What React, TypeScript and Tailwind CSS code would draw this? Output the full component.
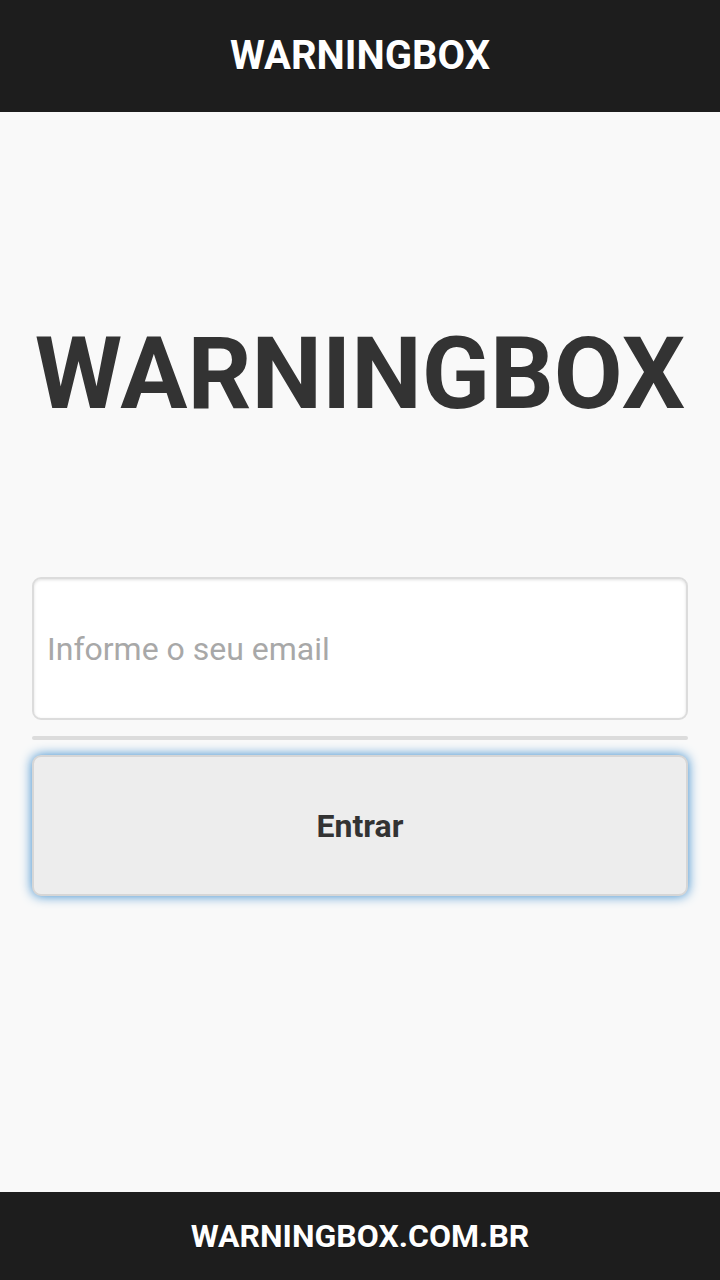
export default function App() {
  return (
    <div
      className="flex h-[1280px] w-[720px] flex-col bg-[#f9f9f9]"
      style={{ fontFamily: "Roboto, 'Noto Sans', sans-serif" }}
    >
      <header className="flex h-[112px] shrink-0 items-center justify-center bg-[#1d1d1d]">
        <h1 className="text-[40px] font-bold leading-none text-white [text-shadow:0_1px_0_#111]">
          WARNINGBOX
        </h1>
      </header>
      <main className="flex flex-1 flex-col px-[32px]">
        <div className="mt-[212px] text-center text-[100px] font-bold leading-none text-[#333]">
          WARNINGBOX
        </div>
        <div className="mt-[153px] flex h-[143px] items-center rounded-[9px] border-2 border-[#dcdcdc] bg-white px-[13px] shadow-[inset_0_1px_3px_rgba(0,0,0,0.12)]">
          <span className="text-[32px] text-[#a8a8a8]">Informe o seu email</span>
        </div>
        <div className="mt-[16px] h-[4px] rounded-full bg-[#dcdcdc]" />
        <button className="mt-[15px] flex h-[141px] items-center justify-center rounded-[9px] border-2 border-[#d6d6d6] bg-[#ededed] text-[32px] font-bold text-[#333] shadow-[0_0_12px_#38c]">
          Entrar
        </button>
      </main>
      <footer className="flex h-[88px] shrink-0 items-center justify-center bg-[#1d1d1d]">
        <span className="text-[32px] font-bold leading-none text-white [text-shadow:0_1px_0_#111]">
          WARNINGBOX.COM.BR
        </span>
      </footer>
    </div>
  );
}
